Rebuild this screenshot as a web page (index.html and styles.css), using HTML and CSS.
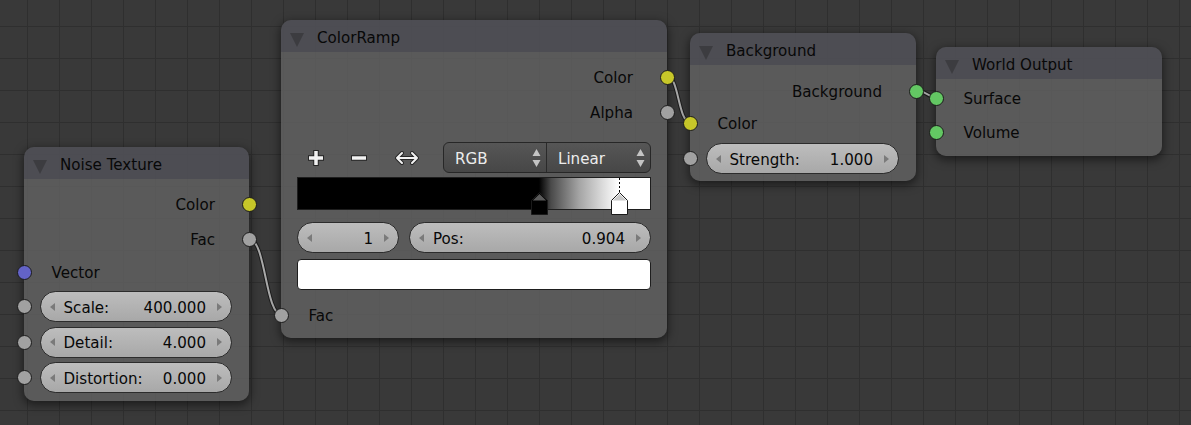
FILE: index.html
```html
<!DOCTYPE html>
<html>
<head>
<meta charset="utf-8">
<title>Node Editor</title>
<link rel="stylesheet" href="styles.css">
</head>
<body>
<div class="canvas">
  <svg class="wires" width="1191" height="425" viewBox="0 0 1191 425">
    <path class="w-dark" d="M249 239 C 266 239, 265 315, 282 315"/>
    <path class="w-light" d="M249 239 C 266 239, 265 315, 282 315"/>
    <path class="w-dark" d="M667 76 C 679 76, 678 122, 690 122"/>
    <path class="w-light" d="M667 76 C 679 76, 678 122, 690 122"/>
    <path class="w-dark" d="M916 90 C 926 90, 926 97, 936 97"/>
    <path class="w-light" d="M916 90 C 926 90, 926 97, 936 97"/>
  </svg>

  <!-- Noise Texture -->
  <div class="node n-noise">
    <div class="head"><span class="tri"></span><span class="title">Noise Texture</span></div>
    <div class="body b-noise">
      <div class="row out">Color<span class="sock s-yellow"></span></div>
      <div class="row out">Fac<span class="sock s-gray"></span></div>
      <div class="row in r31">Vector<span class="sock s-blue"></span></div>
      <div class="fields">
        <div class="fld-row"><span class="sock s-gray"></span>
          <div class="field"><span class="arr l"></span><span class="lbl">Scale:</span><span class="val">400.000</span><span class="arr r"></span></div>
        </div>
        <div class="fld-row"><span class="sock s-gray"></span>
          <div class="field"><span class="arr l"></span><span class="lbl">Detail:</span><span class="val">4.000</span><span class="arr r"></span></div>
        </div>
        <div class="fld-row"><span class="sock s-gray"></span>
          <div class="field"><span class="arr l"></span><span class="lbl">Distortion:</span><span class="val">0.000</span><span class="arr r"></span></div>
        </div>
      </div>
    </div>
  </div>

  <!-- ColorRamp -->
  <div class="node n-ramp">
    <div class="head"><span class="tri"></span><span class="title">ColorRamp</span></div>
    <div class="body b-ramp">
      <div class="row out">Color<span class="sock s-yellow"></span></div>
      <div class="row out">Alpha<span class="sock s-gray"></span></div>
      <div class="ramp-ctrl">
        <div class="toolbar">
          <svg class="ic ic-plus" width="18" height="18" viewBox="0 0 18 18">
            <path d="M9 1v16M1 9h16" stroke="#262626" stroke-width="5.5"/>
            <path d="M9 2v14M2 9h14" stroke="#f2f2f2" stroke-width="3.5"/>
          </svg>
          <svg class="ic ic-minus" width="18" height="18" viewBox="0 0 18 18">
            <path d="M1 9h16" stroke="#262626" stroke-width="5.5"/>
            <path d="M2 9h14" stroke="#f2f2f2" stroke-width="3.5"/>
          </svg>
          <svg class="ic ic-flip" width="26" height="16" viewBox="0 0 26 16">
            <path d="M3 8h20M8 3L3 8l5 5M18 3l5 5-5 5" fill="none" stroke="#262626" stroke-width="4" stroke-linejoin="round" stroke-linecap="round"/>
            <path d="M3 8h20M8 3L3 8l5 5M18 3l5 5-5 5" fill="none" stroke="#f2f2f2" stroke-width="2" stroke-linejoin="round" stroke-linecap="round"/>
          </svg>
          <div class="dd">
            <div class="dd-half dd-first"><span class="dd-txt">RGB</span>
              <svg class="dd-arr" width="9" height="20" viewBox="0 0 9 20"><path d="M0.5 8L4.5 1 8.5 8z M0.5 12L4.5 19 8.5 12z" fill="#c4c4c4"/></svg>
            </div>
            <div class="dd-half"><span class="dd-txt">Linear</span>
              <svg class="dd-arr" width="9" height="20" viewBox="0 0 9 20"><path d="M0.5 8L4.5 1 8.5 8z M0.5 12L4.5 19 8.5 12z" fill="#c4c4c4"/></svg>
            </div>
          </div>
        </div>
        <div class="ramp">
          <svg class="marks" width="355" height="40" viewBox="0 0 355 40">
            <path d="M322.5 1V16" stroke="#000" stroke-width="1" stroke-dasharray="2 2"/>
            <path d="M234.5 23.5L242.5 15.5 250.5 23.5V37.5H234.5z" fill="#000" stroke="#1a1a1a"/>
            <path d="M235.8 23.5L242.5 16.9 249.2 23.5z" fill="#5c5c5c"/>
            <path d="M314.5 23.5L322.5 15.5 330.5 23.5V37.5H314.5z" fill="#fff" stroke="#1a1a1a"/>
            <path d="M315.8 23.5L322.5 16.9 329.2 23.5z" fill="#c8c8c8"/>
          </svg>
        </div>
        <div class="stop-row">
          <div class="field f-idx"><span class="arr l"></span><span class="val">1</span><span class="arr r"></span></div>
          <div class="field f-pos"><span class="arr l"></span><span class="lbl">Pos:</span><span class="val">0.904</span><span class="arr r"></span></div>
        </div>
        <div class="swatch"></div>
      </div>
      <div class="row in r35 fac">Fac<span class="sock s-gray"></span></div>
    </div>
  </div>

  <!-- Background -->
  <div class="node n-bg">
    <div class="head"><span class="tri"></span><span class="title">Background</span></div>
    <div class="body b-bg">
      <div class="row out">Background<span class="sock s-green"></span></div>
      <div class="row in r28">Color<span class="sock s-yellow"></span></div>
      <div class="fld-row strength"><span class="sock s-gray"></span>
        <div class="field"><span class="arr l"></span><span class="lbl">Strength:</span><span class="val">1.000</span><span class="arr r"></span></div>
      </div>
    </div>
  </div>

  <!-- World Output -->
  <div class="node n-world">
    <div class="head"><span class="tri"></span><span class="title">World Output</span></div>
    <div class="body b-world">
      <div class="row in r34">Surface<span class="sock s-green"></span></div>
      <div class="row in r34">Volume<span class="sock s-green"></span></div>
    </div>
  </div>
</div>
</body>
</html>
```

FILE: styles.css
```css
html, body {
  margin: 0;
  padding: 0;
}
body {
  width: 1191px;
  height: 425px;
  overflow: hidden;
  font-family: "DejaVu Sans", "Liberation Sans", sans-serif;
  font-size: 15.1px;
  color: #080808;
}
.canvas {
  position: relative;
  width: 1191px;
  height: 425px;
  background-color: #393939;
  background-image:
    linear-gradient(to right, #2f2f2f 1px, transparent 1px),
    linear-gradient(to bottom, #2f2f2f 1px, transparent 1px);
  background-size: 32px 32px;
  background-position: 27px 26px;
}
.wires {
  position: absolute;
  left: 0;
  top: 0;
}
.w-dark {
  fill: none;
  stroke: #1c1c1c;
  stroke-width: 4;
}
.w-light {
  fill: none;
  stroke: #a9a9a9;
  stroke-width: 2;
}

/* nodes */
.node {
  position: absolute;
  display: flex;
  flex-direction: column;
  border-radius: 10px;
  box-shadow: 0 3px 10px 1px rgba(0, 0, 0, 0.5);
}
.n-noise { left: 24px; top: 147px; width: 225px; height: 254px; }
.n-ramp  { left: 281px; top: 20px; width: 386px; height: 318px; }
.n-bg    { left: 690px; top: 33px; width: 226px; height: 148px; }
.n-world { left: 936px; top: 47px; width: 226px; height: 109px; }

.head {
  height: 32px;
  flex: none;
  display: flex;
  align-items: flex-start;
  background: rgba(80, 80, 86, 0.9);
  border-radius: 10px 10px 0 0;
}
.tri {
  margin: 12.5px 0 0 9px;
  width: 0;
  height: 0;
  border-left: 7.5px solid transparent;
  border-right: 7.5px solid transparent;
  border-top: 14px solid #3c3c40;
}
.title {
  margin-left: 13px;
  line-height: 37px;
  white-space: nowrap;
}
.body {
  flex: 1;
  background: rgba(95, 95, 95, 0.86);
  border-radius: 0 0 10px 10px;
}
.b-noise { padding-top: 8px; }
.b-ramp  { padding-top: 8px; }
.b-bg    { padding-top: 9px; }
.b-world { padding-top: 2px; }

.row {
  position: relative;
  height: 35px;
  line-height: 37px;
  white-space: nowrap;
}
.row.out {
  text-align: right;
  padding-right: 34px;
}
.row.in {
  padding-left: 27.5px;
}
.r31 { height: 31px; line-height: 33px; }
.r28 { height: 28px; line-height: 31px; }
.r34 { height: 34px; line-height: 36px; }
.fac { margin-top: 8px; }

/* sockets */
.sock {
  position: absolute;
  top: 50%;
  width: 15px;
  height: 15px;
  margin-top: -7.5px;
  box-sizing: border-box;
  border: 1px solid #1b1b1b;
  border-radius: 50%;
}
.row.out .sock { right: -7.5px; }
.row.in .sock,
.fld-row .sock { left: -7.5px; }
.s-yellow { background: #c7c729; }
.s-gray   { background: #a1a1a1; }
.s-blue   { background: #6363c7; }
.s-green  { background: #63c763; }

/* number fields */
.fields {
  margin-top: 3px;
  display: flex;
  flex-direction: column;
  gap: 4.5px;
}
.fld-row {
  position: relative;
  padding: 0 17px 0 15.5px;
}
.strength { margin-top: 6px; }
.field {
  display: flex;
  align-items: center;
  box-sizing: border-box;
  height: 31px;
  padding: 0 9px;
  border: 1px solid #2c2c2c;
  border-radius: 15.5px;
  background: linear-gradient(to bottom, #bdbdbd, #a8a8a8);
  white-space: nowrap;
}
.field .lbl,
.field .val {
  line-height: 29px;
  padding-top: 3px;
}
.field .lbl { margin-left: 9px; }
.field .val { margin-left: auto; margin-right: 11px; }
.arr {
  width: 0;
  height: 0;
  border-top: 4.5px solid transparent;
  border-bottom: 4.5px solid transparent;
}
.arr.l { border-right: 5px solid #7a7a7a; }
.arr.r { border-left: 5px solid #7a7a7a; }

/* color ramp controls */
.ramp-ctrl {
  padding: 0 16px;
}
.toolbar {
  margin-top: 12px;
  height: 31px;
  display: flex;
  align-items: center;
}
.ic { display: block; flex: none; }
.ic-plus  { margin-left: 10px; }
.ic-minus { margin-left: 25px; }
.ic-flip  { margin-left: 26px; }
.dd {
  margin-left: auto;
  width: 208px;
  height: 31px;
  box-sizing: border-box;
  display: flex;
  border: 1px solid #272727;
  border-radius: 6px;
  background: linear-gradient(to bottom, #565656, #474747);
  color: #ececec;
}
.dd-half {
  flex: 1;
  display: flex;
  align-items: center;
  padding: 0 5px 0 11px;
}
.dd-first {
  flex: none;
  width: 103px;
  box-sizing: border-box;
  border-right: 1px solid #2a2a2a;
}
.dd-txt {
  line-height: 29px;
  padding-top: 3px;
}
.dd-arr {
  display: block;
  margin-left: auto;
}
.ramp {
  position: relative;
  margin-top: 4px;
  height: 33px;
  box-sizing: border-box;
  border: 1px solid #1e1e1e;
  background: linear-gradient(to right,
    #000 0px, #000 241px,
    #4a4a4a 253px, #a4a4a4 281px, #dcdcdc 305px, #fff 321px, #fff 100%);
}
.marks {
  position: absolute;
  left: -1px;
  top: -1px;
  overflow: visible;
}
.stop-row {
  margin-top: 12px;
  display: flex;
  gap: 10px;
}
.f-idx { width: 102px; flex: none; }
.f-pos { flex: 1; }
.swatch {
  margin-top: 6px;
  height: 31px;
  box-sizing: border-box;
  background: #fff;
  border: 1px solid #1e1e1e;
  border-radius: 4px;
}
```
